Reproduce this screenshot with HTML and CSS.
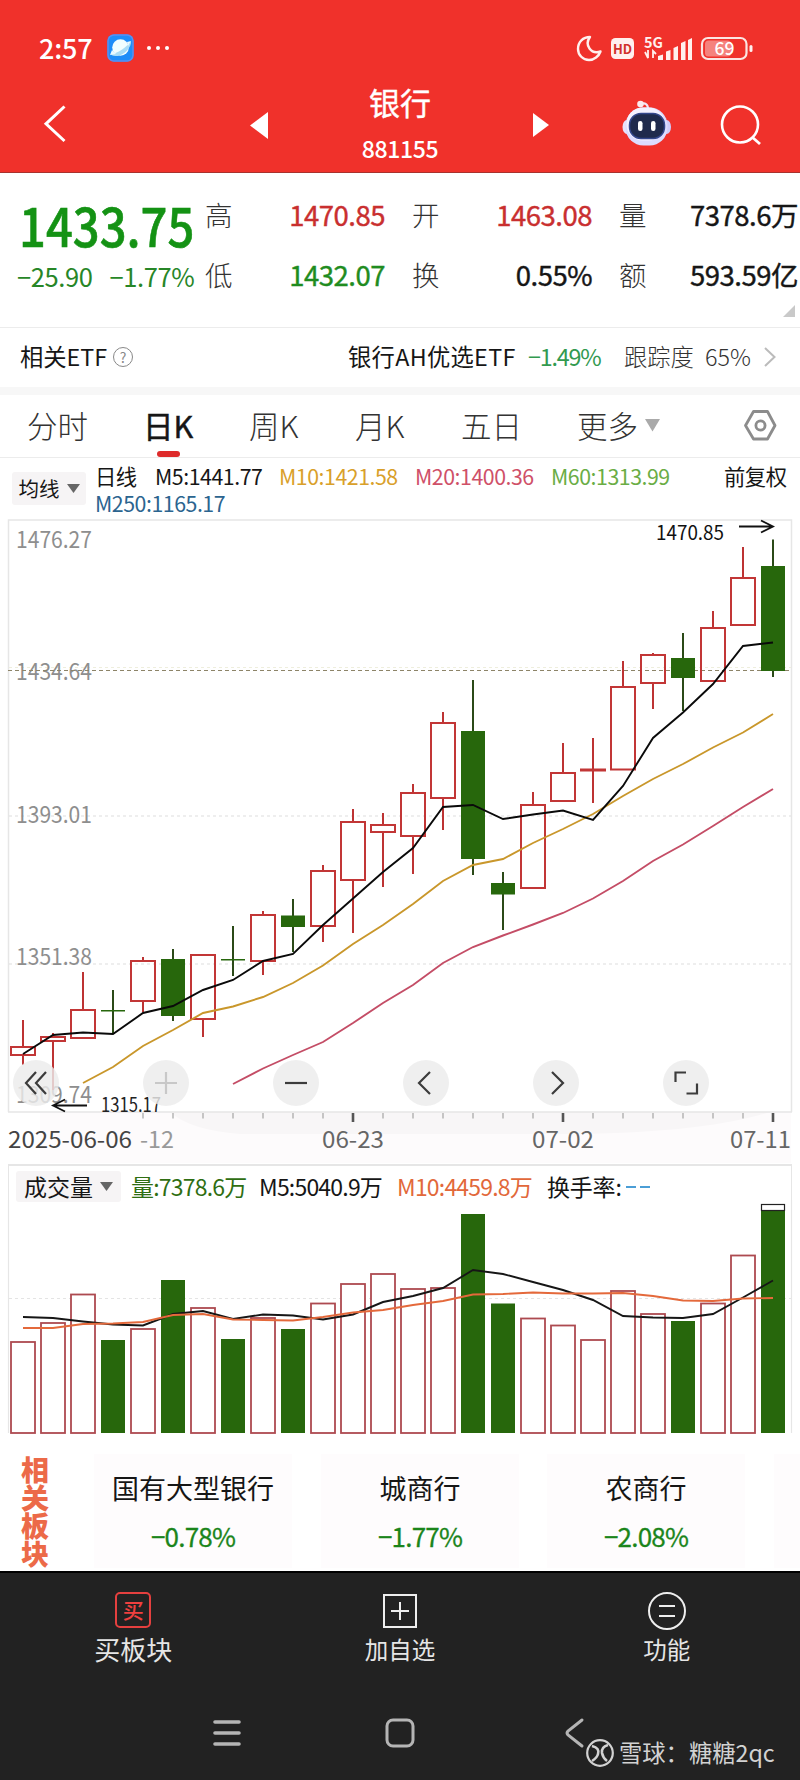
FILE: index.html
```html
<!DOCTYPE html>
<html lang="zh-CN">
<head>
  <meta charset="UTF-8">
  <meta name="viewport" content="width=device-width, initial-scale=1.0">
  <title>银行 881155</title>
  <link rel="stylesheet" href="styles.css">
</head>
<body>
  <header class="header">
    <div class="status">
      <span class="time">2:57</span>
      <svg class="app-icon" width="27" height="28" viewBox="0 0 27 28">
        <rect x="0.5" y="0.5" width="26" height="27" rx="6" fill="#1f8df8"/>
        <rect x="1" y="1" width="25" height="26" rx="6" fill="none" stroke="#5a8ff0" stroke-width="1.5"/>
        <circle cx="13.5" cy="13.5" r="8.3" fill="#f2feff"/>
        <path d="M4 20C10 20 20 13 24 7C25 13 17 21 11 22C7 22 5 22 4 20Z" fill="#a9dcf5"/>
        <path d="M20 8L24 7L21 12ZM5 16L3 21L9 20Z" fill="#eafaff"/>
      </svg>
      <span class="dots"><i></i><i></i><i></i></span>
      <svg class="signals" width="178" height="28" viewBox="0 0 178 28">
        <path d="M14 3C7 3 2 8 2 15C2 21 7 26 13 26C18 26 23 22 24.5 17.5C20 19 16 18 13.5 14.5C11 11 11 7 14 3Z" fill="none" stroke="#fff0ee" stroke-width="2.4" stroke-linejoin="round"/>
        <rect x="35" y="4" width="23" height="21" rx="4.5" fill="#fff0ee"/>
        <text x="46.5" y="19.5" class="hd">HD</text>
        <text x="68" y="13.5" class="net">5G</text>
        <path d="M69 18L72 24V16M77 24V17L80 20" fill="none" stroke="#fff0ee" stroke-width="1.8"/>
        <path d="M82 26V22L87 20.500V26ZM90 26V17.500L94.500 16V26ZM97.500 26V14L102 12V26ZM105 26V9L109.500 7V26ZM112 26V6L116 4V26Z" fill="#fff0ee"/>
        <rect x="126" y="4" width="44.500" height="21" rx="6" fill="none" stroke="#fbe5e3" stroke-width="2.200"/>
        <rect x="129" y="6.500" width="26" height="16" rx="3.500" fill="#f5827d"/>
        <rect x="173.500" y="11" width="3" height="7" rx="1.500" fill="#fff0ee"/>
        <text x="148.500" y="21" class="battery">69</text>
      </svg>
    </div>
    <div class="titlebar">
      <svg class="back" width="22" height="38" viewBox="0 0 22 38"><path d="M20.500 1.500L2 18.800L20.500 36" fill="none" stroke="#fff" stroke-width="3"/></svg>
      <svg class="prev" width="18" height="27" viewBox="0 0 18 27"><path d="M18 0V27L0 13.500Z" fill="#fff"/></svg>
      <div class="title"><b>银行</b><span>881155</span></div>
      <svg class="next" width="16" height="24" viewBox="0 0 16 24"><path d="M0 0V24L16 12Z" fill="#fff"/></svg>
      <svg class="robot" width="50" height="46" viewBox="0 0 50 46">
        <path d="M26 9C26 4 23 2.500 19 4" fill="none" stroke="#f2e4f5" stroke-width="2.200"/>
        <circle cx="18.500" cy="4" r="3.300" fill="#fbe9ee"/>
        <ellipse cx="5" cy="27" rx="4.500" ry="7" fill="#e8e2fb"/>
        <ellipse cx="44.500" cy="27" rx="4.500" ry="7" fill="#cfcdfa"/>
        <rect x="3.500" y="7.500" width="42" height="38" rx="18" fill="#dcdcff"/>
        <rect x="4.500" y="7.500" width="38" height="33" rx="16" fill="#f4f1ff"/>
        <rect x="7.500" y="13.500" width="35" height="25" rx="11.500" fill="#1f2a4c" stroke="#34478c" stroke-width="1.500"/>
        <rect x="16" y="21" width="4.500" height="10" rx="2.200" fill="#fff"/>
        <rect x="29" y="21" width="4.500" height="10" rx="2.200" fill="#fff"/>
      </svg>
      <svg class="search" width="42" height="42" viewBox="0 0 42 42"><circle cx="20" cy="19.500" r="18" fill="none" stroke="#fff" stroke-width="2.600"/><path d="M32 32L40 39" stroke="#fff" stroke-width="2.800"/></svg>
    </div>
  </header>

  <section class="quote">
    <div class="price">
      <div class="last">1433.75</div>
      <div class="change"><span>−25.90</span><span>−1.77%</span></div>
    </div>
    <div class="stats">
      <span class="label">高</span><span class="num up">1470.85</span>
      <span class="label">开</span><span class="num up">1463.08</span>
      <span class="label">量</span><span class="num">7378.6万</span>
      <span class="label">低</span><span class="num down">1432.07</span>
      <span class="label">换</span><span class="num">0.55%</span>
      <span class="label">额</span><span class="num">593.59亿</span>
    </div>
    <svg class="corner" width="12" height="12" viewBox="0 0 12 12"><path d="M12 0V12H0Z" fill="#c9c9c9"/></svg>
  </section>

  <section class="etf">
    <span class="etf-title">相关ETF</span>
    <span class="help">?</span>
    <span class="etf-name">银行AH优选ETF</span>
    <span class="etf-change">−1.49%</span>
    <span class="etf-track">跟踪度 65%</span>
    <svg width="12" height="20" viewBox="0 0 12 20"><path d="M1 1L10.500 10L1 19" fill="none" stroke="#bbb" stroke-width="2"/></svg>
  </section>

  <nav class="tabs">
    <span>分时</span>
    <span class="active">日K</span>
    <span>周K</span>
    <span>月K</span>
    <span>五日</span>
    <span>更多</span>
    <svg class="more" width="15" height="13" viewBox="0 0 15 13"><path d="M0 0H15L7.500 12.500Z" fill="#aaa"/></svg>
    <svg class="setting" width="33" height="31" viewBox="0 0 33 31"><path d="M9.500 1.500H23.500L31 15.500L23.500 29H9.500L1.500 15.500Z" fill="none" stroke="#8c8c8c" stroke-width="2.800" stroke-linejoin="round"/><circle cx="16.500" cy="15.500" r="4.600" fill="none" stroke="#8c8c8c" stroke-width="2.800"/></svg>
  </nav>

  <section class="legend">
    <span class="picker">均线<svg width="13" height="9" viewBox="0 0 13 9"><path d="M0 0H13L6.500 9Z" fill="#666"/></svg></span>
    <div class="averages">
      <span>日线</span>
      <span class="m5">M5:1441.77</span>
      <span class="m10">M10:1421.58</span>
      <span class="m20">M20:1400.36</span>
      <span class="m60">M60:1313.99</span>
      <span class="adjust">前复权</span>
      <span class="m250">M250:1165.17</span>
    </div>
  </section>

  <section class="kline">
    <svg id="kline" width="800" height="645" viewBox="0 519 800 645"></svg>
    <div class="tools">
      <span><svg width="24" height="24" viewBox="0 0 24 24"><path d="M12 1L2 12L12 23M22 1L12 12L22 23"/></svg></span>
      <span class="off"><svg width="24" height="24" viewBox="0 0 24 24"><path d="M12 1V23M1 12H23"/></svg></span>
      <span><svg width="24" height="24" viewBox="0 0 24 24"><path d="M1 12H23"/></svg></span>
      <span><svg width="24" height="24" viewBox="0 0 24 24"><path d="M16 1L5 12L16 23"/></svg></span>
      <span><svg width="24" height="24" viewBox="0 0 24 24"><path d="M8 1L19 12L8 23"/></svg></span>
      <span><svg width="26" height="26" viewBox="0 0 26 26"><path d="M2.500 12V2.500H13M13.500 23.500H24V13.500"/></svg></span>
    </div>
  </section>

  <section class="volume">
    <div class="volume-legend">
      <span class="picker">成交量<svg width="13" height="9" viewBox="0 0 13 9"><path d="M0 0H13L6.500 9Z" fill="#666"/></svg></span>
      <span class="vol">量:7378.6万</span>
      <span class="vm5">M5:5040.9万</span>
      <span class="vm10">M10:4459.8万</span>
      <span class="turnover">换手率:<i></i><i></i></span>
    </div>
    <svg id="volume" width="800" height="234" viewBox="0 1200 800 234"></svg>
  </section>

  <section class="related">
    <div class="related-title">相关板块</div>
    <div class="sector"><span>国有大型银行</span><b>−0.78%</b></div>
    <div class="sector"><span>城商行</span><b>−1.77%</b></div>
    <div class="sector"><span>农商行</span><b>−2.08%</b></div>
    <div class="sector rest"></div>
  </section>

  <footer class="footer">
    <div class="actions">
      <div class="action buy"><i>买</i><span>买板块</span></div>
      <div class="action">
        <svg width="36" height="38" viewBox="0 0 36 38"><rect x="2" y="3" width="32" height="32" fill="none" stroke="#eee" stroke-width="2"/><path d="M18 10V28M9 19H27" stroke="#eee" stroke-width="2"/></svg>
        <span>加自选</span>
      </div>
      <div class="action">
        <svg width="40" height="38" viewBox="0 0 40 38"><circle cx="20" cy="19" r="18" fill="none" stroke="#eee" stroke-width="2"/><path d="M12 14H28M12 24H28" stroke="#eee" stroke-width="2.200"/></svg>
        <span>功能</span>
      </div>
    </div>
    <div class="system">
      <svg width="28" height="28" viewBox="0 0 28 28"><path d="M2 3H26M2 14H26M2 25H26" stroke="#b5b5b5" stroke-width="3.600" stroke-linecap="round"/></svg>
      <svg width="30" height="30" viewBox="0 0 30 30"><rect x="2" y="2" width="26" height="26" rx="6" fill="none" stroke="#b5b5b5" stroke-width="3"/></svg>
      <svg width="20" height="30" viewBox="0 0 20 30"><path d="M18 2L4 13Q2 15 4 17L18 28" fill="none" stroke="#b5b5b5" stroke-width="3" stroke-linecap="round"/></svg>
    </div>
    <div class="watermark">
      <svg width="30" height="30" viewBox="0 0 30 30"><g fill="none" stroke="#d2d2d2"><circle cx="15" cy="15" r="12.800" stroke-width="2.200"/><path d="M7 8Q15 10 13 16Q12 20 7 23M23 7Q16 9 17 15Q18 20 22 23" stroke-width="2.600"/></g></svg>
      <span>雪球：糖糖2qc</span>
    </div>
  </footer>
  <script src="chart.js"></script>
</body>
</html>
```
FILE: styles.css
```css
* {
  box-sizing: border-box;
}
body {
  margin: 0;
  width: 800px;
  height: 1780px;
  overflow: hidden;
  background: #fff;
  color: #161616;
  font-family: "Noto Sans CJK SC", sans-serif;
  line-height: 1;
}
svg {
  display: block;
  flex: none;
  overflow: visible;
}
i {
  font-style: normal;
}

/* header */
.header {
  height: 173px;
  background: #f0312b;
  border-bottom: 1px solid #a8322e;
  color: #fff;
}
.status {
  display: flex;
  align-items: center;
  height: 95px;
  padding-left: 39px;
}
.time {
  width: 68px;
  font-size: 27px;
  font-weight: 500;
  letter-spacing: -0.2px;
}
.dots {
  display: flex;
  gap: 5px;
  margin-left: 13px;
}
.dots i {
  width: 4px;
  height: 4px;
  border-radius: 2px;
  background: #fff;
}
.signals {
  margin-left: auto;
  margin-right: 46px;
}
.hd {
  font: bold 13px "Noto Sans CJK SC", sans-serif;
  fill: #d1302b;
  text-anchor: middle;
}
.net {
  font: bold 14.5px "Noto Sans CJK SC", sans-serif;
  fill: #fff0ee;
}
.battery {
  font: 500 17.5px "Noto Sans CJK SC", sans-serif;
  fill: #fff;
  text-anchor: middle;
}
.titlebar {
  display: grid;
  grid-template-columns: 44px 206px 283px 89px 98px 1fr;
  align-items: start;
}
.back {
  margin: 10px 0 0 44px;
}
.prev {
  margin: 17px 0 0 206px;
}
.title {
  display: flex;
  flex-direction: column;
  align-items: center;
  width: 120px;
  margin-left: 90px;
}
.title b {
  margin-top: -9px;
  font-size: 31px;
  font-weight: 400;
  -webkit-text-stroke: 0.4px;
}
.title span {
  margin-top: 20px;
  font-size: 23px;
  font-weight: 500;
  letter-spacing: -0.4px;
}
.next {
  margin: 18px 0 0 0;
}
.robot {
  margin: 5px 0 0 0;
}
.search {
  margin: 10px 0 0 0;
}

/* quote */
.quote {
  display: flex;
  position: relative;
  height: 155px;
  border-bottom: 1px solid #ececec;
}
.price {
  width: 205px;
  color: #149214;
}
.last {
  height: 50px;
  margin: 26px 0 0 19px;
  font-size: 53px;
  font-weight: 500;
  line-height: 50px;
  transform: scaleX(0.89);
  transform-origin: left;
  -webkit-text-stroke: 0.6px;
}
.change {
  display: flex;
  gap: 17px;
  margin: 14px 0 0 17px;
  font-size: 25.5px;
  letter-spacing: -0.4px;
  color: #278627;
  white-space: nowrap;
}
.stats {
  display: grid;
  column-gap: 27px;
  grid-template-columns: 27px 126px 27px 126px 27px 125px;
  grid-template-rows: 60px 60px;
  width: 594px;
  padding-top: 12px;
  align-items: center;
}
.label {
  font-size: 27.5px;
  font-weight: 300;
  color: #333;
}
.num {
  font-size: 27.5px;
  letter-spacing: -0.5px;
  text-align: right;
  white-space: nowrap;
  -webkit-text-stroke: 0.4px;
}
.up {
  color: #c92f2f;
}
.down {
  color: #1f8c1f;
}
.corner {
  position: absolute;
  right: 5px;
  bottom: 10px;
}

/* related etf */
.etf {
  display: flex;
  align-items: center;
  height: 67px;
  padding: 0 0 1px 20px;
  border-bottom: 8px solid #f7f7f7;
  font-size: 23.3px;
}
.etf-title {
  width: 93px;
}
.help {
  width: 20px;
  height: 20px;
  border: 1px solid #888;
  border-radius: 10px;
  color: #888;
  font-size: 14px;
  line-height: 18px;
  text-align: center;
}
.etf-name {
  width: 180px;
  margin-left: 215px;
  letter-spacing: 0.3px;
  white-space: nowrap;
}
.etf-change {
  width: 96px;
  letter-spacing: -1.2px;
  color: #329a4f;
}
.etf-track {
  width: 140px;
  color: #333;
  font-weight: 300;
  word-spacing: 6px;
  white-space: nowrap;
}

/* tabs */
.tabs {
  display: flex;
  align-items: center;
  height: 63px;
  padding: 0 0 2px 27px;
  border-bottom: 1px solid #ececec;
  font-size: 30.5px;
  font-weight: 300;
  color: #333;
}
.tabs span {
  width: 106px;
  white-space: nowrap;
}
.tabs span:nth-child(1) {
  width: 116px;
}
.tabs span:nth-child(2) {
  width: 106px;
}
.tabs span:nth-child(5) {
  width: 116px;
}
.tabs span:nth-child(6) {
  width: 68px;
}
.tabs .active {
  position: relative;
  font-weight: 400;
  color: #161616;
  -webkit-text-stroke: 0.5px;
}
.active::after {
  content: "";
  position: absolute;
  left: 14px;
  top: 41px;
  width: 23px;
  height: 6px;
  border-radius: 3px;
  background: #de2b2b;
}
.setting {
  margin-left: 84px;
}

/* moving averages */
.legend {
  display: flex;
  height: 61px;
  padding-left: 12px;
}
.picker {
  display: flex;
  align-items: center;
  justify-content: center;
  gap: 7px;
  flex: none;
  border-radius: 3px;
  background: #f6f4f5;
}
.legend .picker {
  width: 74px;
  height: 33px;
  margin-top: 14px;
  font-size: 20.5px;
}
.averages {
  display: grid;
  grid-template-columns: 60px 124px 136px 136px 173px 70px;
  grid-template-rows: 27px 27px;
  align-items: center;
  margin: 4px 0 0 9px;
  font-size: 21.3px;
  letter-spacing: -0.45px;
  white-space: nowrap;
}
.m10 {
  color: #d9a02a;
}
.m20 {
  color: #cf5068;
}
.m60 {
  color: #6aad45;
}
.m250 {
  grid-column: 1 / 4;
  color: #2b648f;
}

/* kline */
.kline {
  position: relative;
  height: 645px;
}
.kline text {
  font-size: 23px;
}
.kline .mark {
  font-size: 19.5px;
}
.tools {
  position: absolute;
  left: 13px;
  top: 541px;
  display: flex;
  gap: 84px;
}
.tools span {
  display: flex;
  align-items: center;
  justify-content: center;
  width: 46px;
  height: 46px;
  border-radius: 23px;
  background: rgba(236, 236, 236, 0.82);
}
.tools path {
  fill: none;
  stroke: #3c3c3c;
  stroke-width: 2.2;
}
.tools .off path {
  stroke: #c8c8c8;
}

/* volume */
.volume {
  height: 270px;
}
.volume-legend {
  display: flex;
  align-items: center;
  height: 36px;
  margin: 0 8px;
  padding: 7px 0 0 7px;
  border: 1px solid #e6e6e6;
  border-top-width: 2px;
  border-bottom: 0;
  font-size: 23px;
  white-space: nowrap;
  letter-spacing: -0.8px;
}
.volume-legend .picker {
  width: 105px;
  height: 31px;
  letter-spacing: 0;
}
.vol {
  width: 128px;
  margin-left: 10px;
  color: #2f6e12;
}
.vm5 {
  width: 138px;
}
.vm10 {
  width: 150px;
  color: #e2683a;
}
.turnover {
  display: flex;
  align-items: center;
  letter-spacing: -0.2px;
}
.turnover i {
  width: 10px;
  height: 2px;
  margin: 0 0 0 4px;
  background: #4b9ed6;
}

/* related sectors */
.related {
  display: flex;
  height: 137px;
  padding: 20px 0 3px 21px;
  background: #fff;
}
.related-title {
  display: flex;
  align-items: flex-end;
  width: 73px;
  margin-top: 2px;
  writing-mode: vertical-rl;
  font-size: 28px;
  font-weight: 900;
  letter-spacing: 0.2px;
  color: #ec6a48;
  white-space: nowrap;
}
.sector {
  display: flex;
  flex-direction: column;
  align-items: center;
  flex: none;
  width: 198px;
  margin-right: 29px;
  background: #fefcfd;
}
.sector:nth-child(3) {
  margin-right: 28px;
}
.sector.rest {
  flex: 1;
  margin: 0;
}
.sector span {
  margin-top: 20px;
  font-size: 27px;
}
.sector b {
  margin-top: 22px;
  font-size: 26px;
  font-weight: 400;
  letter-spacing: -0.8px;
  color: #1b851b;
  -webkit-text-stroke: 0.3px;
}

/* footer */
.footer {
  position: relative;
  height: 209px;
  background: #222;
  border-top: 2px solid #000;
  color: #e6e6e6;
}
.actions {
  display: grid;
  grid-template-columns: repeat(3, 1fr);
  height: 120px;
}
.action {
  display: flex;
  flex-direction: column;
  align-items: center;
  padding-top: 19px;
  font-size: 23.5px;
  font-weight: 400;
}
.action span {
  margin-top: 8px;
}
.buy i {
  width: 36px;
  height: 36px;
  border: 2px solid #e5403f;
  border-radius: 5px;
  color: #f0403f;
  font-size: 21px;
  font-weight: 500;
  line-height: 31px;
  text-align: center;
}
.buy span {
  font-size: 26px;
}
.system {
  display: flex;
  align-items: center;
  height: 80px;
  padding-left: 213px;
  gap: 144px;
}
.system svg:last-child {
  margin-left: 5px;
}
.watermark {
  position: absolute;
  left: 585px;
  top: 165px;
  display: flex;
  align-items: center;
  gap: 4px;
  font-size: 23.3px;
  color: #d2d2d2;
}
```
FILE: chart.js
```javascript
// x of the first candle and distance between candles
const START = 23;
const STEP = 30;

// color, high, body top, body bottom, low
const candles = [
  ['r', 1020, 1047, 1055, 1065], ['r', 1033, 1037, 1041, 1090],
  ['r', 972, 1010, 1038, 1038], ['g', 990, 1010, 1011.5, 1033],
  ['r', 957, 961, 1001, 1012], ['g', 949, 959, 1016, 1021],
  ['r', 955, 955, 1019, 1037], ['g', 926, 959, 960.5, 976],
  ['r', 911, 915, 961, 975], ['g', 899, 915.5, 927, 952],
  ['r', 865, 871, 926, 942], ['r', 809, 822, 880, 933],
  ['r', 813, 825, 832, 887], ['r', 784, 793, 836, 874],
  ['r', 712, 723, 798, 830], ['g', 680, 731, 859, 875],
  ['g', 872, 883, 894.5, 930], ['r', 792, 805, 888, 888],
  ['r', 743, 773, 801, 801], ['r', 738, 769.5, 770.5, 803],
  ['r', 661, 687, 769.5, 769.5], ['r', 653, 655, 683, 709],
  ['g', 633, 658, 678, 711], ['r', 611, 628, 681, 681],
  ['r', 547, 578, 625, 625], ['g', 539.5, 566, 671, 677]
];
const ma5 = [1054, 1035, 1032.5, 1034, 1013, 1006, 990, 980, 961, 954, 925, 898.5, 872, 848, 807, 805, 819, 814.5, 810.5, 820, 786, 738, 712.5, 684, 646, 642.5];
const ma10 = [1083, 1067, 1046, 1030, 1013, 1006.5, 997, 983, 965.5, 944, 925, 904, 881, 865, 859, 843, 829, 814, 796, 779, 764, 747.5, 732.5, 714];
const ma20 = [1084, 1068.5, 1055, 1042, 1023, 1003, 985, 963, 947, 935.5, 924.5, 913, 898.5, 881, 861, 844.5, 826, 807, 789];

const volumes = [1342, 1323, 1294.5, 1340, 1329, 1280, 1308, 1339, 1318, 1329, 1303.5, 1284, 1274, 1289, 1288, 1214, 1303.5, 1318.5, 1325.5, 1340, 1291, 1314, 1321, 1303.5, 1255.5, 1210];
const vma5 = [1317, 1318, 1321.5, 1324.5, 1325.5, 1314, 1311, 1319, 1314.5, 1315.5, 1319.5, 1314.5, 1302, 1296, 1288, 1270, 1274, 1282, 1290, 1300, 1316, 1317.5, 1318, 1314, 1297.5, 1280.5];
const vma10 = [1328, 1328, 1324, 1323.5, 1322, 1315, 1314, 1319.5, 1320, 1320.5, 1317, 1312.5, 1310, 1305, 1301, 1294.5, 1294, 1292.5, 1293.5, 1293.5, 1293, 1296, 1300.5, 1301, 1298.5, 1298];

const path = (d, color, width, extra = '') =>
  `<path d="${d}" fill="none" stroke="${color}" stroke-width="${width}" ${extra}/>`;

function line(data, from, color) {
  const points = data.map((y, i) => `${START + (from + i) * STEP},${y}`).join(' ');
  return `<polyline points="${points}" fill="none" stroke="${color}" stroke-width="1.9"/>`;
}

function text(x, y, width, value, color, name = 'axis') {
  return `<text class="${name}" x="${x}" y="${y}" textLength="${width}" lengthAdjust="spacingAndGlyphs" fill="${color}">${value}</text>`;
}

function drawKline() {
  let out = '<rect x="40" y="1112" width="751" height="51" fill="#fdfbfc"/>';
  out += '<path d="M170 1112H770Q700 1134 560 1134H240Q190 1130 170 1112Z" fill="#f8f6f7"/>';
  out += path('M8.500 1112V520H791.500V1112M8 1112H792', '#e6e6e6', 1.5);
  out += path('M9 816H791M9 964H791', '#dedede', 1.2, 'stroke-dasharray="3 3"');
  out += path('M9 667.500H791', '#eeeedd', 1, 'stroke-dasharray="3 3"');
  out += text(16, 548, 76, '1476.27', '#8e8e8e');
  out += text(16, 680, 76, '1434.64', '#8e8e8e');
  out += text(16, 823, 76, '1393.01', '#8e8e8e');
  out += text(16, 965, 76, '1351.38', '#8e8e8e');
  out += text(16, 1103, 76, '1309.74', '#8e8e8e');
  out += path('M8 670.500H791', '#8d8468', 1.1, 'stroke-dasharray="4 3"');

  candles.forEach(([color, high, top, bottom, low], i) => {
    const x = START + i * STEP;
    if (color === 'r') {
      out += path(`M${x} ${high}V${top}M${x} ${bottom}V${low}`, '#bd3333', 2);
      out += `<rect x="${x - 12}" y="${top}" width="24" height="${bottom - top}" fill="none" stroke="#c23636" stroke-width="2"/>`;
    } else {
      out += path(`M${x} ${high}V${low}`, '#2b4a18', 2);
      out += `<rect x="${x - 12}" y="${top}" width="24" height="${bottom - top}" fill="#27670c"/>`;
    }
  });
  out += line(ma10, 2, '#c9972b') + line(ma20, 7, '#c44d66') + line(ma5, 0, '#0a0a0a');

  out += text(656, 540, 68, '1470.85', '#111', 'mark');
  out += path('M739 526.500H772M761 520.500L773 526.500L761 532.500', '#111', 1.8);
  out += text(101, 1111.5, 60, '1315.17', '#222', 'mark');
  out += path('M87 1105.500H54M65 1099.500L53 1105.500L65 1111.500', '#111', 1.8);

  for (let i = 4; i < 26; i++) {
    const x = START + i * STEP;
    const big = i === 11 || i === 18 || i === 25;
    out += path(`M${x} 1113V${big ? 1122 : 1118.5}`, big ? '#555' : '#aaa', big ? 2.6 : 1.3);
  }
  out += text(8, 1147.5, 124, '2025-06-06', '#444');
  out += text(140, 1147.5, 34, '-12', '#999');
  out += text(322, 1147.5, 62, '06-23', '#666');
  out += text(532, 1147.5, 62, '07-02', '#666');
  out += text(730, 1147.5, 61, '07-11', '#666');
  document.getElementById('kline').innerHTML = out;
}

function drawVolume() {
  let out = path('M8.500 1200V1433M791.500 1200V1433', '#e6e6e6', 1.2);
  out += path('M9 1298.500H791', '#e4e4e4', 1, 'stroke-dasharray="3 3"');
  volumes.forEach((top, i) => {
    const x = START + i * STEP - 12;
    if (candles[i][0] === 'r') {
      out += `<rect x="${x}" y="${top}" width="24" height="${1433 - top}" fill="#fff" stroke="#ad4a50" stroke-width="1.8"/>`;
    } else {
      out += `<rect x="${x}" y="${top}" width="24" height="${1433 - top}" fill="#27670c"/>`;
    }
  });
  out += '<rect x="761.500" y="1204.500" width="23" height="6" fill="#fff" stroke="#222" stroke-width="1.2"/>';
  out += line(vma5, 0, '#161616') + line(vma10, 0, '#e4693b');
  document.getElementById('volume').innerHTML = out;
}

drawKline();
drawVolume();
```
